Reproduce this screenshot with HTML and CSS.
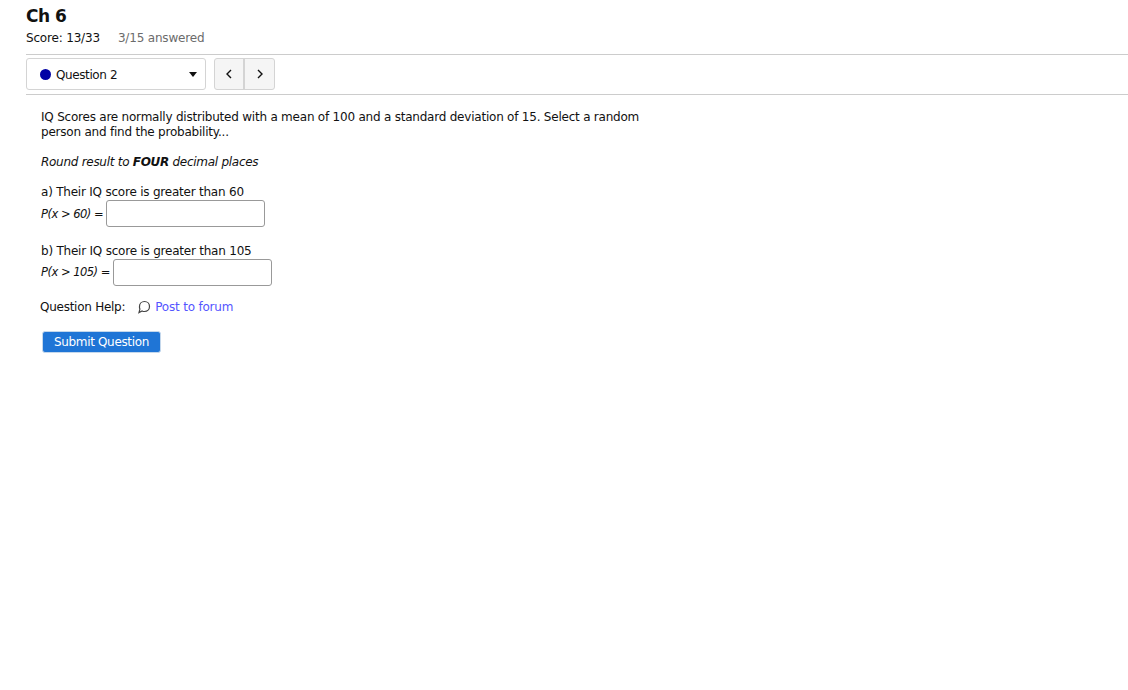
FILE: index.html
```html
<!DOCTYPE html>
<html lang="en">
<head>
<meta charset="utf-8">
<title>Ch 6</title>
<link rel="stylesheet" href="styles.css">
</head>
<body>
<main class="page">
  <h1 class="title">Ch 6</h1>
  <div class="score-row"><span>Score: 13/33</span><span class="answered">3/15 answered</span></div>
  <nav class="nav-bar">
    <div class="select">
      <span class="dot"></span>
      <span class="select-label">Question 2</span>
      <span class="caret"></span>
    </div>
    <div class="pager">
      <button class="page-btn" aria-label="Previous"><svg width="8" height="12" viewBox="0 0 8 12"><path d="M6 2 2 6l4 4" fill="none" stroke="#111" stroke-width="1.4"/></svg></button>
      <button class="page-btn" aria-label="Next"><svg width="8" height="12" viewBox="0 0 8 12"><path d="M2 2l4 4-4 4" fill="none" stroke="#111" stroke-width="1.4"/></svg></button>
    </div>
  </nav>
  <section class="question">
    <p class="intro">IQ Scores are normally distributed with a mean of 100 and a standard deviation of 15. Select a random person and find the probability...</p>
    <p class="note"><em>Round result to <strong>FOUR</strong> decimal places</em></p>
    <div class="part">
      <div class="part-label">a) Their IQ score is greater than 60</div>
      <label class="answer"><span><em>P(x &gt; 60)</em> =</span><input class="box" type="text"></label>
    </div>
    <div class="part part-b">
      <div class="part-label">b) Their IQ score is greater than 105</div>
      <label class="answer"><span class="answer-text-b"><em>P(x &gt; 105)</em> =</span><input class="box" type="text"></label>
    </div>
    <div class="help">
      <span>Question Help:</span>
      <svg class="bubble" width="14" height="14" viewBox="0 0 14 14"><path d="M7.500 1.500C10.300 1.500 12.500 3.600 12.500 6.500s-2.200 5-5 5c-.9 0-1.700-.2-2.400-.6L2 12.500l.9-3.400A5 5 0 0 1 2.500 6.500c0-2.900 2.200-5 5-5z" fill="none" stroke="#444" stroke-width="1.200"/></svg>
      <a class="forum" href="#">Post to forum</a>
    </div>
    <button class="submit">Submit Question</button>
  </section>
</main>
</body>
</html>
```

FILE: styles.css
```css
* { box-sizing: border-box; }
html, body { margin: 0; background: #fff; }
body { font-family: "DejaVu Sans", Verdana, sans-serif; font-size: 12px; color: #111; }
.page { padding: 6px 0 0 26px; }
.title { margin: 0; font-size: 17px; line-height: 20px; font-weight: 700; letter-spacing: -0.5px; }
.score-row { display: flex; gap: 18px; margin-top: 3px; height: 25px; line-height: 18px; font-size: 12px; letter-spacing: -0.18px; }
.answered { color: #6b6b6b; }
.nav-bar { display: flex; gap: 8px; align-items: flex-start; height: 41px; padding-top: 3px; border-top: 1px solid #ccc; border-bottom: 1px solid #ccc; }
.select { display: flex; align-items: center; width: 180px; height: 32px; padding: 1px 8px 0 13px; border: 1px solid #d4d4d4; border-radius: 3px; background: #fff; }
.dot { width: 11px; height: 11px; border-radius: 50%; background: #0000a5; margin-right: 5px; }
.select-label { flex: 1; letter-spacing: -0.4px; }
.caret { width: 0; height: 0; border-left: 4px solid transparent; border-right: 4px solid transparent; border-top: 5px solid #111; }
.pager { display: flex; height: 32px; border: 1px solid #d4d4d4; border-radius: 3px; background: #f5f5f5; }
.page-btn { width: 28px; padding: 0; border: 0; background: transparent; display: flex; align-items: center; justify-content: center; }
.page-btn + .page-btn { width: 31px; border-left: 2px solid #d4d4d4; }
.question { padding: 15px 0 0 15px; letter-spacing: -0.22px; }
.intro { margin: 0; width: 610px; line-height: 15px; }
.note { margin: 15px 0 0; line-height: 15px; letter-spacing: -0.28px; }
.part { margin-top: 15px; }
.part-b { margin-top: 17px; }
.part-label { line-height: 15px; }
.answer { display: flex; align-items: center; gap: 3px; height: 27px; font-size: 11.500px; letter-spacing: -0.5px; }
.answer-text-b { margin-bottom: 2px; }
.box { width: 159px; height: 27px; border: 1px solid #999; border-radius: 3px; background: #fff; }
.help { display: flex; align-items: center; height: 18px; margin-top: 12px; margin-left: -1px; letter-spacing: -0.26px; }
.bubble { margin-left: 12px; margin-right: 4px; }
.forum { color: #5555ff; text-decoration: none; letter-spacing: -0.2px; }
.submit { display: block; margin: 15px 0 0 1px; width: 119px; height: 22px; padding: 0; border: 1px solid #c5d8ec; border-radius: 3px; background: #1f75d6; color: #fff; font: 12px "DejaVu Sans", sans-serif; letter-spacing: -0.34px; }
```
